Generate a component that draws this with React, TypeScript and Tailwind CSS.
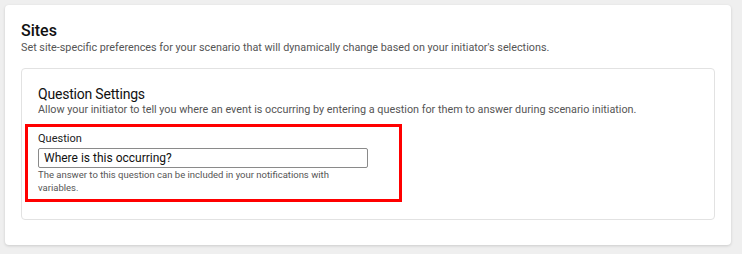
export default function App() {
  return (
    <div className="min-h-[254px] w-[742px] bg-[#efefef] p-[5px] pr-[11px]" style={{ fontFamily: "Roboto, 'Liberation Sans', sans-serif" }}>
      <div className="rounded-[4px] bg-white px-[16px] pt-[16px] pb-[25px] shadow-[0_1px_3px_rgba(0,0,0,0.15)]">
        <h1 className="text-[16px] leading-[20px] font-medium text-[#111]">Sites</h1>
        <p className="text-[10.8px] leading-[14px] text-[#555]">
          Set site-specific preferences for your scenario that will dynamically change based on your initiator's selections.
        </p>
        <div className="mt-[13px] rounded-[4px] border border-[#e2e2e2] pl-[16px] pr-[16px] pt-[16px] pb-[17px]">
          <h2 className="text-[14px] leading-[18px] font-normal tracking-[-0.2px] text-[#111]">Question Settings</h2>
          <p className="text-[10.8px] leading-[14px] text-[#555]">
            Allow your initiator to tell you where an event is occurring by entering a question for them to answer during scenario initiation.
          </p>
          <div className="-ml-[13px] mt-[7px] w-[377px] border-[3px] border-[#ff0000] pl-[10px] pr-[31px] pt-[5px] pb-[5px]">
            <label className="block text-[11px] leading-[14px] text-[#222]">Question</label>
            <input
              type="text"
              defaultValue="Where is this occurring?"
              className="mt-[2px] block h-[20px] w-[330px] rounded-[2px] border border-[#8a8a8a] px-[5px] text-[12px] text-[#111] outline-none"
              style={{ fontFamily: "Roboto, 'Liberation Sans', sans-serif" }}
            />
            <p className="w-[330px] text-[9.5px] leading-[13px] text-[#555]">
              The answer to this question can be included in your notifications with variables.
            </p>
          </div>
        </div>
      </div>
    </div>
  );
}
